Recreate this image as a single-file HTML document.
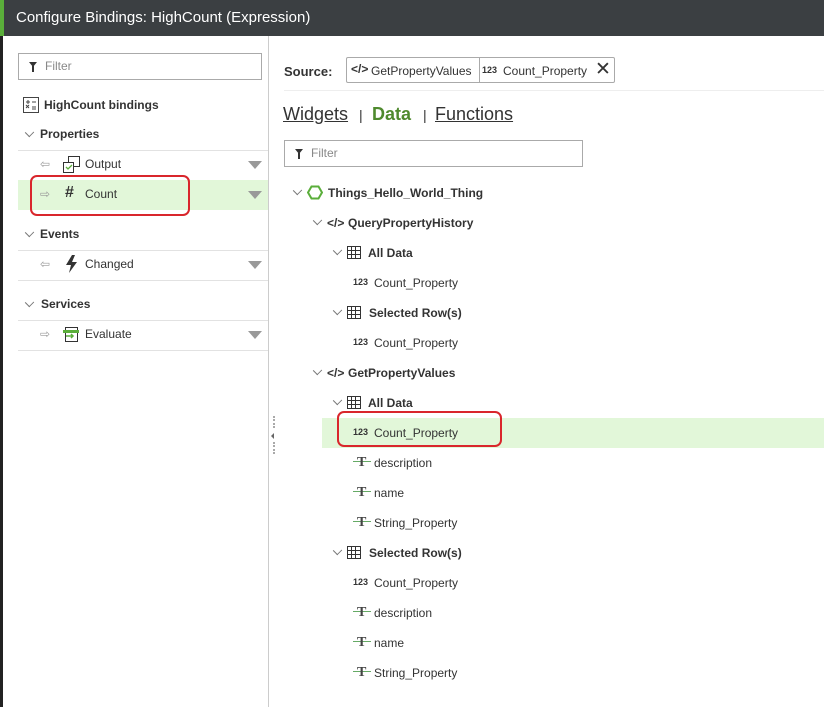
<!DOCTYPE html>
<html><head><meta charset="utf-8"><style>
*{box-sizing:border-box;margin:0;padding:0}
body{width:824px;height:707px;overflow:hidden;background:#fff;font-family:"Liberation Sans",Arial,sans-serif;color:#333;position:relative;font-size:12px}
.a{position:absolute;white-space:nowrap}
.title{left:0;top:0;width:824px;height:36px;background:#3b3f42;color:#fff;font-size:15px;line-height:36px;padding-left:16px}
.gbar{left:0;top:0;width:4px;height:36px;background:#5aae3a}
.lstrip{left:0;top:36px;width:3px;height:671px;background:#222}
.vline{left:268px;top:36px;width:1px;height:671px;background:#ccc}
.filter{border:1px solid #aaa;height:27px;font-size:12px;color:#888;line-height:25px;padding-left:26px}
.fi{position:absolute;left:10px;top:8px;width:0;height:0;border-left:4px solid transparent;border-right:4px solid transparent;border-top:5px solid #333}
.fi:after{content:"";position:absolute;left:-1px;top:-1px;width:2px;height:6px;background:#333}
.hl{height:1px;background:#e2e2e2}
.b{font-weight:bold}
.chev{width:7px;height:7px;border-left:1px solid #777;border-bottom:1px solid #777;transform:rotate(-45deg) scale(1,0.9)}
.tri{width:0;height:0;border-left:7px solid transparent;border-right:7px solid transparent;border-top:8px solid #999}
.arr{color:#999;font-size:12px}
.red{border:2px solid #d9262c;border-radius:7px}
.grid{width:14px;height:13px;border:1px solid #333;background:
linear-gradient(#333,#333) 0 3px/100% 1px no-repeat,
linear-gradient(#333,#333) 0 7px/100% 1px no-repeat,
linear-gradient(#333,#333) 3px 0/1px 100% no-repeat,
linear-gradient(#333,#333) 7px 0/1px 100% no-repeat}
.n123{font-size:9px;font-weight:bold;color:#333}
.tt{font-family:"Liberation Serif",serif;font-weight:bold;font-size:14px;color:#444;line-height:14px}
.tt:before{content:"";position:absolute;left:-4px;top:5px;width:18px;height:1px;background:#6a6;z-index:-1}
</style></head><body>
<div class="a title">Configure Bindings: HighCount (Expression)</div>
<div class="a gbar"></div>
<div class="a lstrip"></div>
<div class="a vline"></div>

<div class="a filter" style="left:18px;top:53px;width:244px"><span class="fi"></span>Filter</div>
<svg class="a" style="left:23px;top:97px" width="16" height="16"><rect x="0.5" y="0.5" width="15" height="15" fill="none" stroke="#444"/><path d="M3 5h4M5 3v4M9 5h4M3 11l3-3M3 8l3 3M9 10h4M9 12h4" stroke="#444"/></svg>
<div class="a b" style="left:44px;top:98px">HighCount bindings</div>
<div class="a chev" style="left:26px;top:129px"></div>
<div class="a b" style="left:40px;top:127px">Properties</div>
<div class="a hl" style="left:18px;top:150px;width:250px"></div>
<div class="a arr" style="left:40px;top:157px">⇦</div>
<svg class="a" style="left:63px;top:156px" width="17" height="17"><rect x="5.5" y="0.5" width="11" height="10" fill="#fff" stroke="#333"/><rect x="0.5" y="6.5" width="10" height="10" fill="#fff" stroke="#333"/><path d="M3 11l2 2 4-4" stroke="#5aae3a" fill="none" stroke-width="1.3"/></svg>
<div class="a" style="left:85px;top:157px">Output</div>
<div class="a tri" style="left:248px;top:161px"></div>
<div class="a" style="left:18px;top:180px;width:250px;height:30px;background:#e2f7d9"></div>
<div class="a arr" style="left:40px;top:187px">⇨</div>
<div class="a b" style="left:65px;top:184px;font-size:16px">#</div>
<div class="a" style="left:85px;top:187px">Count</div>
<div class="a tri" style="left:248px;top:191px"></div>
<div class="a red" style="left:30px;top:175px;width:160px;height:41px"></div>
<div class="a chev" style="left:26px;top:229px"></div>
<div class="a b" style="left:40px;top:227px">Events</div>
<div class="a hl" style="left:18px;top:250px;width:250px"></div>
<div class="a arr" style="left:40px;top:257px">⇦</div>
<svg class="a" style="left:66px;top:255px" width="12" height="18"><path d="M6 0L0 10h5l-2 8 8-11H6l3-7z" fill="#333"/></svg>
<div class="a" style="left:85px;top:257px">Changed</div>
<div class="a tri" style="left:248px;top:261px"></div>
<div class="a hl" style="left:18px;top:280px;width:250px"></div>
<div class="a chev" style="left:26px;top:299px"></div>
<div class="a b" style="left:41px;top:297px">Services</div>
<div class="a hl" style="left:18px;top:320px;width:250px"></div>
<div class="a arr" style="left:40px;top:327px">⇨</div>
<svg class="a" style="left:63px;top:326px" width="16" height="17"><rect x="2.5" y="1.5" width="12" height="14" fill="#fff" stroke="#333"/><rect x="0" y="4" width="16" height="3" fill="#5aae3a"/><path d="M3 10h7M8 8l2 2-2 2" stroke="#5aae3a" fill="none" stroke-width="1.5"/></svg>
<div class="a" style="left:85px;top:327px">Evaluate</div>
<div class="a tri" style="left:248px;top:331px"></div>
<div class="a hl" style="left:18px;top:350px;width:250px"></div>

<div class="a" style="left:273px;top:416px;width:2px;height:12px;border-left:2px dotted #aaa"></div>
<div class="a" style="left:271px;top:433px;width:0;height:0;border-top:3px solid transparent;border-bottom:3px solid transparent;border-right:3px solid #666"></div>
<div class="a" style="left:273px;top:442px;width:2px;height:12px;border-left:2px dotted #aaa"></div>

<div class="a b" style="left:284px;top:64px;font-size:13px">Source:</div>
<div class="a" style="left:346px;top:57px;width:269px;height:26px;border:1px solid #aaa;border-radius:2px"></div>
<div class="a" style="left:479px;top:57px;width:1px;height:26px;background:#aaa"></div>
<div class="a b" style="left:351px;top:62px;font-size:12px">&lt;/&gt;</div>
<div class="a" style="left:371px;top:64px">GetPropertyValues</div>
<div class="a n123" style="left:482px;top:65px">123</div>
<div class="a" style="left:503px;top:64px">Count_Property</div>
<div class="a" style="left:595px;top:58px;font-size:19px;color:#333">✕</div>
<div class="a hl" style="left:284px;top:90px;width:540px;background:#eee"></div>
<div class="a" style="left:283px;top:104px;font-size:18px;text-decoration:underline;color:#333">Widgets</div>
<div class="a" style="left:359px;top:107px;font-size:14px">|</div>
<div class="a b" style="left:372px;top:104px;font-size:18px;color:#4f8a2e">Data</div>
<div class="a" style="left:423px;top:107px;font-size:14px">|</div>
<div class="a" style="left:435px;top:104px;font-size:18px;text-decoration:underline;color:#333">Functions</div>
<div class="a filter" style="left:284px;top:140px;width:299px"><span class="fi"></span>Filter</div>

<div class="a chev" style="left:294px;top:187px"></div>
<svg class="a" style="left:307px;top:185px" width="16" height="15"><path d="M4.5 1.5h7l3.5 6-3.5 6h-7L1 7.5z" fill="none" stroke="#5aae3a" stroke-width="2"/></svg>
<div class="a b" style="left:328px;top:186px">Things_Hello_World_Thing</div>

<div class="a chev" style="left:314px;top:217px"></div>
<div class="a b" style="left:327px;top:216px">&lt;/&gt;</div>
<div class="a b" style="left:348px;top:216px">QueryPropertyHistory</div>

<div class="a chev" style="left:334px;top:247px"></div>
<div class="a grid" style="left:347px;top:246px"></div>
<div class="a b" style="left:368px;top:246px">All Data</div>
<div class="a n123" style="left:353px;top:277px">123</div>
<div class="a" style="left:374px;top:276px">Count_Property</div>

<div class="a chev" style="left:334px;top:307px"></div>
<div class="a grid" style="left:347px;top:306px"></div>
<div class="a b" style="left:369px;top:306px">Selected Row(s)</div>
<div class="a n123" style="left:353px;top:337px">123</div>
<div class="a" style="left:374px;top:336px">Count_Property</div>

<div class="a chev" style="left:314px;top:367px"></div>
<div class="a b" style="left:327px;top:366px">&lt;/&gt;</div>
<div class="a b" style="left:348px;top:366px">GetPropertyValues</div>

<div class="a chev" style="left:334px;top:397px"></div>
<div class="a grid" style="left:347px;top:396px"></div>
<div class="a b" style="left:368px;top:396px">All Data</div>
<div class="a" style="left:322px;top:418px;width:502px;height:30px;background:#e2f7d9"></div>
<div class="a n123" style="left:353px;top:427px">123</div>
<div class="a" style="left:374px;top:426px">Count_Property</div>
<div class="a red" style="left:337px;top:411px;width:165px;height:36px"></div>
<div class="a tt" style="left:357px;top:456px">T</div><div class="a" style="left:374px;top:456px">description</div>
<div class="a tt" style="left:357px;top:486px">T</div><div class="a" style="left:374px;top:486px">name</div>
<div class="a tt" style="left:357px;top:516px">T</div><div class="a" style="left:374px;top:516px">String_Property</div>

<div class="a chev" style="left:334px;top:547px"></div>
<div class="a grid" style="left:347px;top:546px"></div>
<div class="a b" style="left:369px;top:546px">Selected Row(s)</div>
<div class="a n123" style="left:353px;top:577px">123</div>
<div class="a" style="left:374px;top:576px">Count_Property</div>
<div class="a tt" style="left:357px;top:606px">T</div><div class="a" style="left:374px;top:606px">description</div>
<div class="a tt" style="left:357px;top:636px">T</div><div class="a" style="left:374px;top:636px">name</div>
<div class="a tt" style="left:357px;top:666px">T</div><div class="a" style="left:374px;top:666px">String_Property</div>
</body></html>
